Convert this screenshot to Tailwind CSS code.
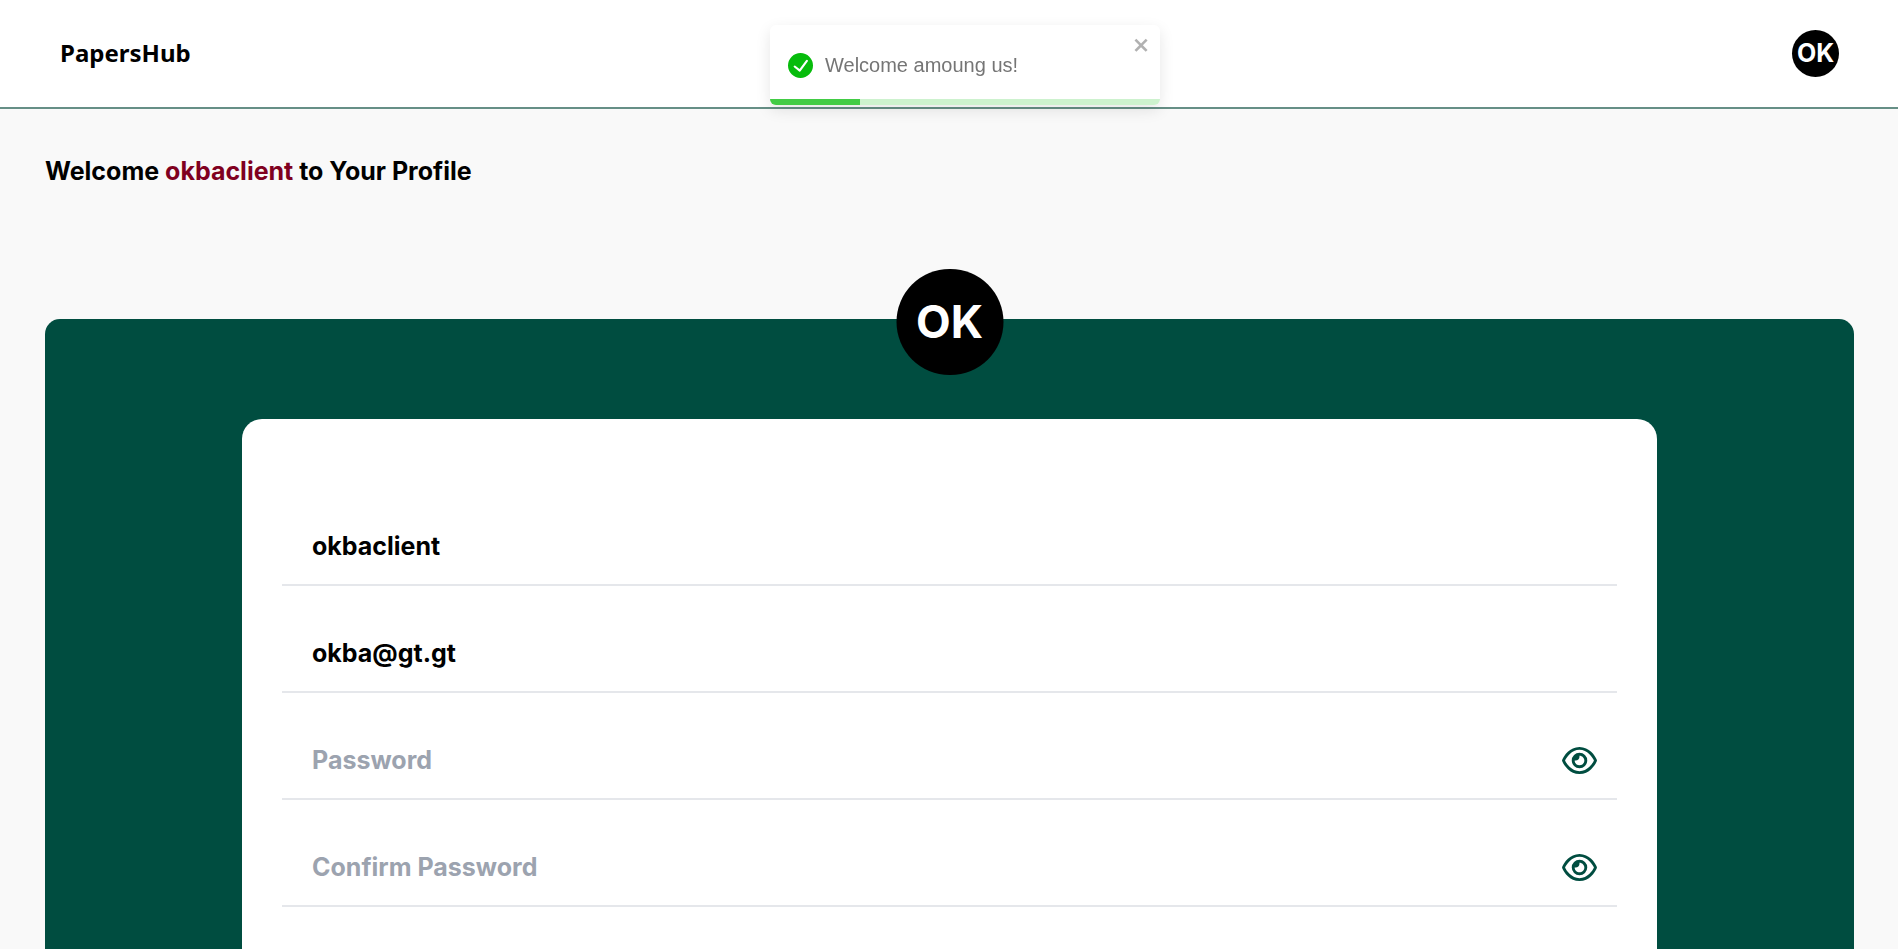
<!DOCTYPE html>
<html lang="en">
<head>
    <meta charset="UTF-8">
    <meta name="viewport" content="width=device-width, initial-scale=1.0">
    <title>PapersHub - Profile</title>
    <script src="https://cdn.jsdelivr.net/npm/@tailwindcss/browser@4"></script>
</head>
<body class="flex min-h-screen flex-col bg-[#f9f9f9] font-['Inter',sans-serif] text-black">
    <!-- Header -->
    <header class="flex h-[109px] shrink-0 items-center justify-between border-b-2 border-[#668f86] bg-white pr-[59px] pl-[60px]">
        <a href="#" class="pb-[2px] font-['Noto_Sans',sans-serif] text-[24px] font-bold">PapersHub</a>
        <button type="button" aria-label="Account" class="flex size-[47px] items-center justify-center rounded-full bg-black text-[25px] font-bold text-white">OK</button>
    </header>

    <!-- Toast -->
    <div role="alert" class="fixed top-[25px] left-[calc(50%+16px)] flex h-[80px] w-[390px] -translate-x-1/2 items-center overflow-hidden rounded-md bg-white px-[18px] font-['Liberation_Sans',sans-serif] shadow-[0_5px_15px_rgba(0,0,0,0.1)]">
        <svg class="mr-3 size-[25px] shrink-0 fill-[#07bc0c]" viewBox="0 0 24 24">
            <path d="M12 0a12 12 0 1012 12A12.014 12.014 0 0012 0zm6.927 8.2l-6.845 9.289a1.011 1.011 0 01-1.43.188l-4.888-3.908a1 1 0 111.25-1.562l4.076 3.261 6.227-8.451a1 1 0 111.61 1.183z"/>
        </svg>
        <p class="text-[20px] text-[#757575]">Welcome amoung us!</p>
        <button type="button" aria-label="close" class="absolute top-[10px] right-[9px] text-black opacity-30">
            <svg class="h-[20px] w-[18px] fill-current" viewBox="0 0 14 16">
                <path fill-rule="evenodd" d="M7.71 8.23l3.75 3.75-1.48 1.48-3.75-3.75-3.75 3.75L1 11.98l3.75-3.75L1 4.48 2.48 3l3.75 3.75L9.98 3l1.48 1.48-3.75 3.75z"/>
            </svg>
        </button>
        <div class="absolute inset-x-0 bottom-0 h-[6px] bg-[#07bc0c]/20">
            <div class="h-full bg-[#07bc0c]/70" style="width: 23%"></div>
        </div>
    </div>

    <!-- Profile -->
    <main class="flex grow flex-col pt-[42px] pr-[44px] pl-[45px]">
        <h1 class="text-[25px] leading-[40px] font-bold">Welcome <span class="text-[#800020]">okbaclient</span> to Your Profile</h1>

        <section class="relative mt-[128px] flex grow flex-col rounded-t-[15px] bg-[#004d40] px-[197px] pt-[100px]">
            <div class="absolute -top-[50px] left-1/2 flex h-[106px] w-[107px] -translate-x-1/2 items-center justify-center rounded-full bg-black text-[45px] font-bold text-white">OK</div>

            <form class="flex grow flex-col gap-[30px] rounded-t-[20px] bg-white px-[40px] pt-[90px]">
                <div class="flex h-[77px] items-center border-b-2 border-[#e5e7eb]">
                    <input type="text" aria-label="Username" value="okbaclient" class="h-full w-full px-[30px] pb-[2px] text-[25px] font-bold outline-none">
                </div>
                <div class="flex h-[77px] items-center border-b-2 border-[#e5e7eb]">
                    <input type="email" aria-label="Email" value="okba@gt.gt" class="h-full w-full px-[30px] pb-[2px] text-[25px] font-bold outline-none">
                </div>
                <div class="flex h-[77px] items-center border-b-2 border-[#e5e7eb] pr-[20px]">
                    <input type="password" aria-label="Password" placeholder="Password" class="h-full w-full px-[30px] pb-[2px] text-[25px] font-bold outline-none placeholder:text-[#9ca3af]">
                    <button type="button" aria-label="Show password" class="shrink-0">
                        <svg class="h-[31px] w-[35px] fill-[#004d40]" viewBox="0 0 576 512">
                            <path d="M288 80c-65.2 0-118.8 29.6-159.9 67.7C89.6 183.5 63 226 49.4 256c13.6 30 40.2 72.5 78.6 108.3C169.2 402.4 222.8 432 288 432s118.8-29.6 159.9-67.7C486.4 328.5 513 286 526.6 256c-13.6-30-40.2-72.5-78.6-108.3C406.8 109.6 353.2 80 288 80zM95.4 112.6C142.5 68.8 207.2 32 288 32s145.5 36.8 192.6 80.6c46.8 43.5 78.1 95.4 93 131.1c3.3 7.9 3.3 16.7 0 24.6c-14.9 35.7-46.2 87.7-93 131.1C433.5 443.2 368.8 480 288 480s-145.5-36.8-192.6-80.6C48.6 356 17.3 304 2.5 268.3c-3.3-7.9-3.3-16.7 0-24.6C17.3 208 48.6 156 95.4 112.6zM288 336c44.2 0 80-35.8 80-80s-35.8-80-80-80c-.7 0-1.3 0-2 0c1.3 5.1 2 10.5 2 16c0 35.3-28.7 64-64 64c-5.5 0-10.9-.7-16-2c0 .7 0 1.3 0 2c0 44.2 35.8 80 80 80zm0-208a128 128 0 1 1 0 256 128 128 0 1 1 0-256z"/>
                        </svg>
                    </button>
                </div>
                <div class="flex h-[77px] items-center border-b-2 border-[#e5e7eb] pr-[20px]">
                    <input type="password" aria-label="Confirm Password" placeholder="Confirm Password" class="h-full w-full px-[30px] pb-[2px] text-[25px] font-bold outline-none placeholder:text-[#9ca3af]">
                    <button type="button" aria-label="Show confirmed password" class="shrink-0">
                        <svg class="h-[31px] w-[35px] fill-[#004d40]" viewBox="0 0 576 512">
                            <path d="M288 80c-65.2 0-118.8 29.6-159.9 67.7C89.6 183.5 63 226 49.4 256c13.6 30 40.2 72.5 78.6 108.3C169.2 402.4 222.8 432 288 432s118.8-29.6 159.9-67.7C486.4 328.5 513 286 526.6 256c-13.6-30-40.2-72.5-78.6-108.3C406.8 109.6 353.2 80 288 80zM95.4 112.6C142.5 68.8 207.2 32 288 32s145.5 36.8 192.6 80.6c46.8 43.5 78.1 95.4 93 131.1c3.3 7.9 3.3 16.7 0 24.6c-14.9 35.7-46.2 87.7-93 131.1C433.5 443.2 368.8 480 288 480s-145.5-36.8-192.6-80.6C48.6 356 17.3 304 2.5 268.3c-3.3-7.9-3.3-16.7 0-24.6C17.3 208 48.6 156 95.4 112.6zM288 336c44.2 0 80-35.8 80-80s-35.8-80-80-80c-.7 0-1.3 0-2 0c1.3 5.1 2 10.5 2 16c0 35.3-28.7 64-64 64c-5.5 0-10.9-.7-16-2c0 .7 0 1.3 0 2c0 44.2 35.8 80 80 80zm0-208a128 128 0 1 1 0 256 128 128 0 1 1 0-256z"/>
                        </svg>
                    </button>
                </div>
            </form>
        </section>
    </main>
</body>
</html>
